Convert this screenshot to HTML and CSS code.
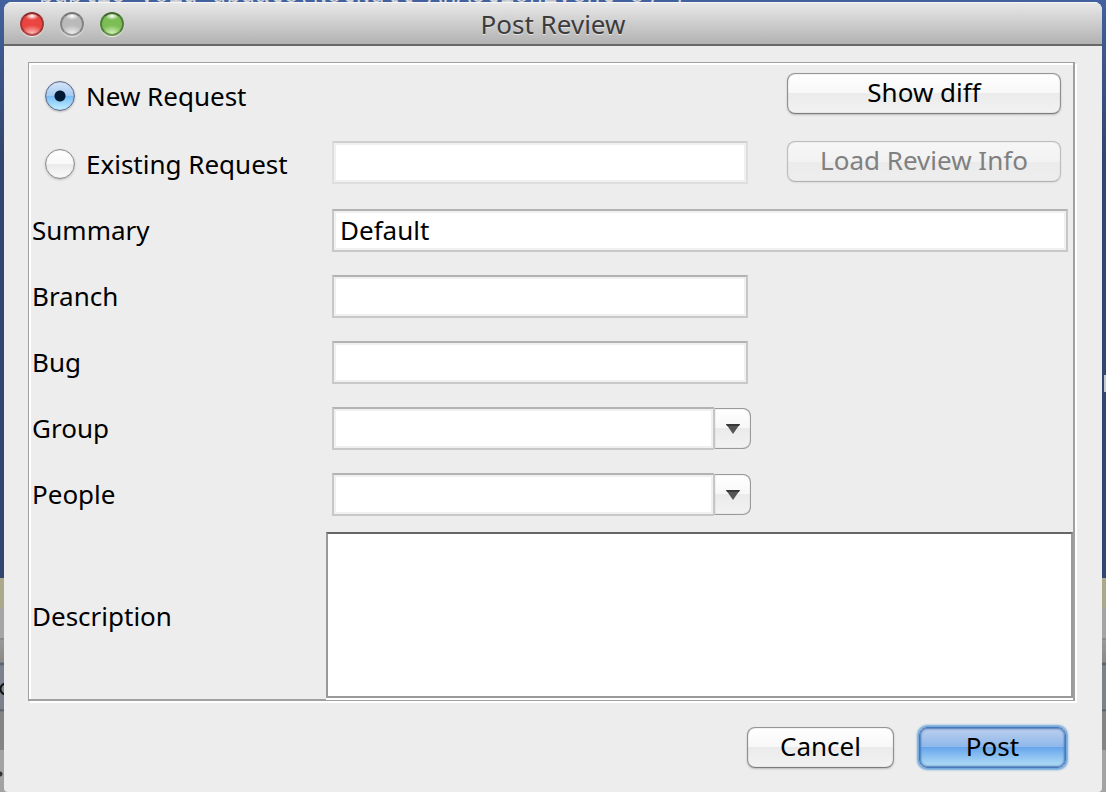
FILE: index.html
```html
<!DOCTYPE html>
<html lang="en">
<head>
<meta charset="utf-8">
<title>Post Review</title>
<link rel="stylesheet" href="styles.css">
</head>
<body>
<div class="editor-line" aria-hidden="true">public void update(NotNull AnActionEvent e) {</div>
<main class="window">
  <header class="titlebar">
    <div class="lights">
      <button class="light light-close" type="button" aria-label="Close"></button>
      <button class="light light-minimize" type="button" aria-label="Minimize" disabled></button>
      <button class="light light-zoom" type="button" aria-label="Zoom"></button>
    </div>
    <h1 class="title">Post Review</h1>
  </header>
  <form class="content">
    <div class="panel">
      <div class="row row-new">
        <label class="choice"><input class="radio" type="radio" name="mode" checked>New Request</label>
        <button class="button wide" type="button">Show diff</button>
      </div>
      <div class="row row-existing">
        <label class="choice"><input class="radio" type="radio" name="mode">Existing Request</label>
        <input class="field" type="text" aria-label="Existing Request" disabled>
        <button class="button wide" type="button" disabled>Load Review Info</button>
      </div>
      <div class="row">
        <label class="label" for="summary">Summary</label>
        <input class="field field-full" id="summary" type="text" value="Default">
      </div>
      <div class="row">
        <label class="label" for="branch">Branch</label>
        <input class="field" id="branch" type="text">
      </div>
      <div class="row">
        <label class="label" for="bug">Bug</label>
        <input class="field" id="bug" type="text">
      </div>
      <div class="row">
        <label class="label" for="group">Group</label>
        <div class="combo">
          <input class="field" id="group" type="text">
          <button class="arrow" type="button" aria-label="Show groups"><svg width="14" height="10" viewBox="0 0 14 10"><path d="M0 0H14L7 10Z" fill="#555"/><path d="M0 0H14L13 2H1Z" fill="#383838"/></svg></button>
        </div>
      </div>
      <div class="row">
        <label class="label" for="people">People</label>
        <div class="combo">
          <input class="field" id="people" type="text">
          <button class="arrow" type="button" aria-label="Show people"><svg width="14" height="10" viewBox="0 0 14 10"><path d="M0 0H14L7 10Z" fill="#555"/><path d="M0 0H14L13 2H1Z" fill="#383838"/></svg></button>
        </div>
      </div>
      <div class="row row-description">
        <label class="label" for="description">Description</label>
        <textarea class="area" id="description"></textarea>
      </div>
    </div>
    <footer class="actions">
      <button class="button action" type="button">Cancel</button>
      <button class="button action primary" type="submit">Post</button>
    </footer>
  </form>
</main>
</body>
</html>
```
FILE: styles.css
```css
* { box-sizing: border-box; }

body {
  margin: 0;
  min-height: 100vh;
  padding: 2px 4px 0;
  display: flex;
  overflow: hidden;
  font: 26px/34px "Noto Sans", "Open Sans", sans-serif;
  color: #000;
  background:
    linear-gradient(#c4c8d2, #c4c8d2) 100% 375px / 2px 17px no-repeat,
    radial-gradient(circle at 6px 6px, transparent 4px, #111 5px, #111 6px, transparent 7px) 0 683px / 4px 12px no-repeat,
    radial-gradient(circle at 0 50%, #333 2px, transparent 3px) 0 770px / 4px 8px no-repeat,
    linear-gradient(#43619f 0, #33466f 150px, #33466f 578px,
    #aaa98a 578px, #aaa98a 608px, #a5a5a3 608px, #a5a5a3 638px,
    #8a8a8a 638px, #8a8a8a 640px, #999 640px, #8c8a86 661px,
    #9a9a9a 661px, #515a68 664px, #7b828e 666px, #7b828e 709px,
    #4f5968 710px, #858482 712px, #858482 750px, #a3a3a3 750px);
}

.editor-line {
  position: absolute;
  left: 39px;
  top: -18px;
  font: 24px/28px "Liberation Mono", monospace;
  color: #d4d6d8;
  white-space: pre;
}

.window {
  position: relative;
  flex: 1;
  display: flex;
  flex-direction: column;
  border-radius: 8px 8px 4px 4px;
  background: #ededed;
  overflow: hidden;
}

.titlebar {
  display: grid;
  grid-template-columns: 1fr auto 1fr;
  align-items: center;
  height: 44px;
  padding: 2px 16px 0;
  border-bottom: 2px solid #686868;
  background: linear-gradient(#e9e9e9, #b2b2b2);
  box-shadow: inset 0 1px #f6f6f6;
}

.lights { display: flex; gap: 16px; }

.light {
  width: 24px;
  height: 24px;
  padding: 0;
  border: 2px solid;
  border-radius: 50%;
  box-shadow: 0 1px 1px #eee;
}

.light-close {
  border-color: #8c2d2b #a33835 #b04b48;
  background: radial-gradient(ellipse 7px 4px at 50% 2px, #fff, transparent),
    radial-gradient(ellipse 12px 9px at 50% 100%, #ffc4be, transparent), #ea4541;
}

.light-minimize {
  border-color: #777 #858585 #999;
  background: radial-gradient(ellipse 7px 4px at 50% 2px, #fff, transparent),
    radial-gradient(ellipse 12px 9px at 50% 100%, #f2f2f2, transparent), #bababa;
}

.light-zoom {
  border-color: #3f682c #50803b #67954e;
  background: radial-gradient(ellipse 7px 4px at 50% 2px, #fff, transparent),
    radial-gradient(ellipse 12px 9px at 50% 100%, #dcf5c0, transparent), #7cbd56;
}

.title {
  margin: 0;
  font-size: 26px;
  font-weight: 400;
  color: #3c3c3c;
  text-shadow: 0 1px #e4e4e4;
}

.content { padding: 16px 27px 24px 24px; }

.panel {
  border: 1px solid #a0a0a0;
  border-width: 1px 2px 2px 1px;
  box-shadow: inset 2px 2px #fff, 2px 2px #fff;
  padding: 2px 0 0 2px;
}

.row {
  display: grid;
  grid-template-columns: 301px 416px 1fr;
  align-items: center;
  height: 66px;
}

.row-new, .row-existing { align-items: start; }
.row-new { height: 64px; padding-top: 8px; }
.row-existing { height: 68px; padding-top: 12px; }

.label { padding-left: 1px; }

.choice {
  display: flex;
  align-items: center;
  gap: 11px;
  height: 46px;
  padding-left: 14px;
  white-space: nowrap;
}

.radio {
  appearance: none;
  width: 30px;
  height: 30px;
  margin: 0;
  border: 1px solid #8e8e8e;
  border-radius: 50%;
  background: linear-gradient(#fff 0, #f8f8f8 50%, #eaeaea 50%, #fafafa);
  box-shadow: inset 0 0 1px #8e8e8e, 0 1px 2px #bbb;
}

.radio:checked {
  border-color: #626c8c;
  background: radial-gradient(circle 6px, #001a35 5px, transparent 6px),
    linear-gradient(#d6e5f7 0, #a4cbf3 50%, #78bbf5 50%, #c2f1ff);
  box-shadow: inset 0 0 1px #626c8c, 0 1px 2px #bbb;
}

.field {
  width: 100%;
  height: 43px;
  min-width: 0;
  margin: 0;
  padding: 0 6px;
  border: 2px solid #c8c8c8;
  border-top-color: #b2b2b2;
  border-radius: 0;
  outline: 0;
  background: #fff;
  box-shadow: inset 0 0 0 2px #f0f0f0, inset 0 2px #e4e4e4;
  font: inherit;
  color: inherit;
}

.field:disabled {
  border-color: #dedede;
  border-top-color: #d0d0d0;
}

.field-full { grid-column: 2 / -1; width: calc(100% - 5px); }

.button {
  height: 41px;
  padding: 0 0 4px;
  border: 1px solid #8c8c8c;
  border-color: #969696 #909090 #7d7d7d;
  border-radius: 8px;
  background: linear-gradient(#fff 0, #f7f7f7 50%, #ebebeb 50%, #f2f2f2);
  box-shadow: inset 0 0 1px #888, 0 1px 2px #bbb;
  font: inherit;
  line-height: 34px;
  color: #000;
}

.button:disabled {
  border-color: #bdbdbd #bdbdbd #b2b2b2;
  background: linear-gradient(#f6f6f6 0, #f2f2f2 50%, #ebebeb 50%, #eee);
  box-shadow: inset 0 0 1px #bbb, 0 1px 2px #ddd;
  color: #808080;
}

.wide { grid-column: 3; margin: 0 12px 0 39px; }

.combo { display: flex; align-items: center; width: 419px; }
.combo .field { flex: 1; border-right-width: 1px; }

.arrow {
  display: grid;
  place-items: center;
  width: 37px;
  height: 41px;
  margin-top: 1px;
  padding: 0;
  border: 1px solid #999;
  border-left-color: #c4c4c4;
  border-radius: 0 8px 8px 0;
  background: linear-gradient(#fff 0, #f7f7f7 50%, #ebebeb 50%, #f2f2f2);
  box-shadow: inset 0 0 1px #999;
}

.row-description {
  height: auto;
  margin-top: 5px;
  grid-template-columns: 295px 1fr;
}

.area {
  display: block;
  width: 100%;
  height: 166px;
  margin: 0 0 1px;
  padding: 4px 8px;
  border: 2px solid #999;
  border-top-color: #666;
  border-radius: 0;
  outline: 0;
  box-shadow: 0 2px #fff;
  resize: none;
  font: inherit;
}

.actions {
  display: flex;
  justify-content: flex-end;
  gap: 25px;
  padding: 26px 9px 0 0;
}

.action { width: 147px; }

.primary {
  border-color: #4a78b8;
  background: linear-gradient(#bccfed 0, #8db7eb 50%, #68a6ec 50%, #b5e0f5);
  box-shadow: inset 0 0 2px 1px #4a78b8, 0 0 2px 2px #6ea6dc;
}
```
